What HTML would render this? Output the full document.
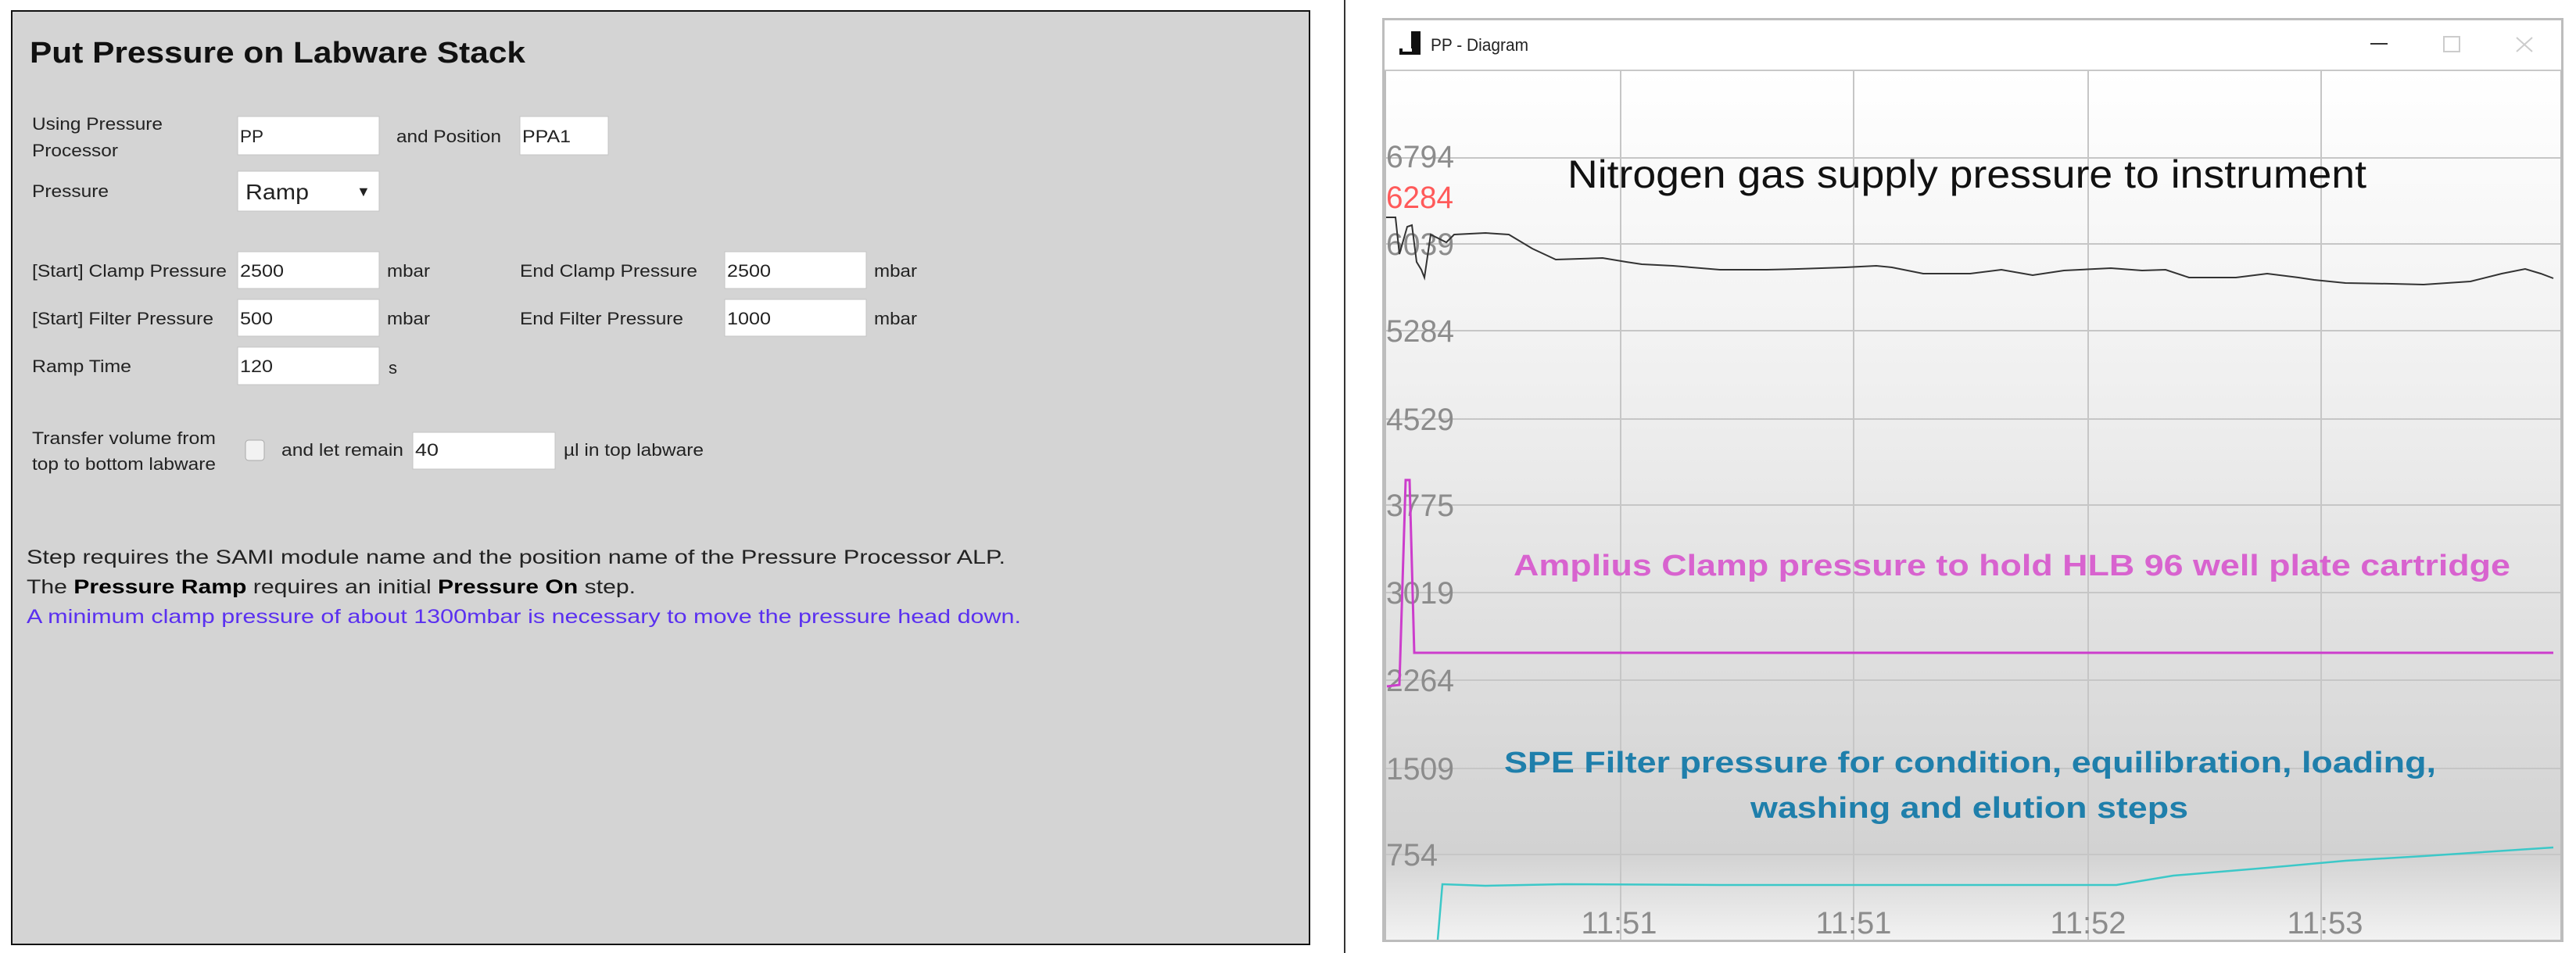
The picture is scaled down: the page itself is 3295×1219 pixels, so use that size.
<!DOCTYPE html>
<html><head><meta charset="utf-8"><style>
html,body{margin:0;padding:0;background:#fff;width:3295px;height:1219px;overflow:hidden}
svg{display:block}
text{font-family:"Liberation Sans",sans-serif}
</style></head><body>
<svg width="3295" height="1219" viewBox="0 0 3295 1219" xmlns="http://www.w3.org/2000/svg">
<defs>
<linearGradient id="g" x1="0" y1="0" x2="0" y2="1">
<stop offset="0" stop-color="#ffffff"/>
<stop offset="0.35" stop-color="#f0f0f0"/>
<stop offset="0.9" stop-color="#d2d2d2"/>
<stop offset="1" stop-color="#f2f2f2"/>
</linearGradient>
</defs>
<!-- LEFT PANEL -->
<rect x="15" y="14" width="1660" height="1194" fill="#d4d4d4" stroke="#111" stroke-width="2"/>
<text x="38" y="80" font-size="38" font-weight="bold" fill="#111" textLength="634" lengthAdjust="spacingAndGlyphs">Put Pressure on Labware Stack</text>
<g font-size="22" fill="#222">
<text x="41" y="166" textLength="167" lengthAdjust="spacingAndGlyphs">Using Pressure</text>
<text x="41" y="200" textLength="110" lengthAdjust="spacingAndGlyphs">Processor</text>
<rect x="304" y="149" width="181" height="49" fill="#fff" stroke="#c4c4c4"/>
<text x="307" y="182" textLength="30" lengthAdjust="spacingAndGlyphs">PP</text>
<text x="507" y="182" textLength="134" lengthAdjust="spacingAndGlyphs">and Position</text>
<rect x="665" y="149" width="113" height="49" fill="#fff" stroke="#c4c4c4"/>
<text x="668" y="182" textLength="62" lengthAdjust="spacingAndGlyphs">PPA1</text>
<text x="41" y="252" textLength="98" lengthAdjust="spacingAndGlyphs">Pressure</text>
<rect x="304" y="219" width="181" height="51" fill="#fff" stroke="#c4c4c4"/>
<text x="314" y="255" font-size="28" textLength="81" lengthAdjust="spacingAndGlyphs">Ramp</text>
<text x="456" y="251" font-size="18">▼</text>

<text x="41" y="354" textLength="249" lengthAdjust="spacingAndGlyphs">[Start] Clamp Pressure</text>
<rect x="304" y="322" width="181" height="47" fill="#fff" stroke="#c4c4c4"/>
<text x="307" y="354" textLength="56" lengthAdjust="spacingAndGlyphs">2500</text>
<text x="495" y="354" textLength="55" lengthAdjust="spacingAndGlyphs">mbar</text>
<text x="665" y="354" textLength="227" lengthAdjust="spacingAndGlyphs">End Clamp Pressure</text>
<rect x="927" y="322" width="181" height="47" fill="#fff" stroke="#c4c4c4"/>
<text x="930" y="354" textLength="56" lengthAdjust="spacingAndGlyphs">2500</text>
<text x="1118" y="354" textLength="55" lengthAdjust="spacingAndGlyphs">mbar</text>

<text x="41" y="415" textLength="232" lengthAdjust="spacingAndGlyphs">[Start] Filter Pressure</text>
<rect x="304" y="383" width="181" height="47" fill="#fff" stroke="#c4c4c4"/>
<text x="307" y="415" textLength="42" lengthAdjust="spacingAndGlyphs">500</text>
<text x="495" y="415" textLength="55" lengthAdjust="spacingAndGlyphs">mbar</text>
<text x="665" y="415" textLength="209" lengthAdjust="spacingAndGlyphs">End Filter Pressure</text>
<rect x="927" y="383" width="181" height="47" fill="#fff" stroke="#c4c4c4"/>
<text x="930" y="415" textLength="56" lengthAdjust="spacingAndGlyphs">1000</text>
<text x="1118" y="415" textLength="55" lengthAdjust="spacingAndGlyphs">mbar</text>

<text x="41" y="476" textLength="127" lengthAdjust="spacingAndGlyphs">Ramp Time</text>
<rect x="304" y="444" width="181" height="48" fill="#fff" stroke="#c4c4c4"/>
<text x="307" y="476" textLength="42" lengthAdjust="spacingAndGlyphs">120</text>
<text x="497" y="478">s</text>

<text x="41" y="568" textLength="235" lengthAdjust="spacingAndGlyphs">Transfer volume from</text>
<text x="41" y="601" textLength="235" lengthAdjust="spacingAndGlyphs">top to bottom labware</text>
<rect x="314" y="563" width="24" height="26" rx="4" fill="#f2f2f2" stroke="#aaa"/>
<text x="360" y="583" textLength="156" lengthAdjust="spacingAndGlyphs">and let remain</text>
<rect x="528" y="553" width="182" height="47" fill="#fff" stroke="#c4c4c4"/>
<text x="531" y="583" textLength="30" lengthAdjust="spacingAndGlyphs">40</text>
<text x="721" y="583" textLength="179" lengthAdjust="spacingAndGlyphs">µl in top labware</text>
</g>
<g font-size="25">
<text x="34" y="721" fill="#222" textLength="1252" lengthAdjust="spacingAndGlyphs">Step requires the SAMI module name and the position name of the Pressure Processor ALP.</text>
<text x="34" y="759" fill="#222" textLength="779" lengthAdjust="spacingAndGlyphs">The <tspan font-weight="bold" fill="#000">Pressure Ramp</tspan> requires an initial <tspan font-weight="bold" fill="#000">Pressure On</tspan> step.</text>
<text x="34" y="797" fill="#5a30f0" textLength="1272" lengthAdjust="spacingAndGlyphs">A minimum clamp pressure of about 1300mbar is necessary to move the pressure head down.</text>
</g>

<!-- DIVIDER -->
<line x1="1720" y1="0" x2="1720" y2="1219" stroke="#333" stroke-width="2"/>

<!-- WINDOW -->
<rect x="1768" y="23" width="1511" height="1182" fill="#bdbdbd"/>
<rect x="1771" y="26" width="1505" height="64" fill="#fff"/>
<line x1="1771" y1="90" x2="3276" y2="90" stroke="#c8c8c8" stroke-width="2"/>
<rect x="1773" y="91" width="1502" height="1111" fill="url(#g)"/>
<!-- title icon -->
<rect x="1805" y="40" width="12" height="30" fill="#111"/>
<rect x="1790" y="62" width="20" height="8" fill="#111"/>
<rect x="1794" y="62" width="12" height="4" fill="#fff"/>
<text x="1830" y="65" font-size="22" fill="#222" textLength="125" lengthAdjust="spacingAndGlyphs">PP - Diagram</text>
<line x1="3032" y1="56" x2="3054" y2="56" stroke="#333" stroke-width="2"/>
<rect x="3126" y="47" width="20" height="19" fill="none" stroke="#ccc" stroke-width="2"/>
<path d="M3219 48 L3239 66 M3239 48 L3219 66" stroke="#ccc" stroke-width="2"/>

<!-- grid -->
<g stroke="#c6c6c6" stroke-width="2">
<line x1="1773" y1="202" x2="3275" y2="202"/>
<line x1="1773" y1="312" x2="3275" y2="312"/>
<line x1="1773" y1="423" x2="3275" y2="423"/>
<line x1="1773" y1="536" x2="3275" y2="536"/>
<line x1="1773" y1="646" x2="3275" y2="646"/>
<line x1="1773" y1="758" x2="3275" y2="758"/>
<line x1="1773" y1="870" x2="3275" y2="870"/>
<line x1="1773" y1="983" x2="3275" y2="983"/>
<line x1="1773" y1="1093" x2="3275" y2="1093"/>
<line x1="2073" y1="91" x2="2073" y2="1202"/>
<line x1="2371" y1="91" x2="2371" y2="1202"/>
<line x1="2671" y1="91" x2="2671" y2="1202"/>
<line x1="2969" y1="91" x2="2969" y2="1202"/>
</g>
<g font-size="40" fill="#8c8c8c">
<text x="1773" y="214" textLength="87" lengthAdjust="spacingAndGlyphs">6794</text>
<text x="1773" y="326" textLength="87" lengthAdjust="spacingAndGlyphs">6039</text>
<text x="1773" y="437" textLength="87" lengthAdjust="spacingAndGlyphs">5284</text>
<text x="1773" y="550" textLength="87" lengthAdjust="spacingAndGlyphs">4529</text>
<text x="1773" y="660" textLength="87" lengthAdjust="spacingAndGlyphs">3775</text>
<text x="1773" y="772" textLength="87" lengthAdjust="spacingAndGlyphs">3019</text>
<text x="1773" y="884" textLength="87" lengthAdjust="spacingAndGlyphs">2264</text>
<text x="1773" y="997" textLength="87" lengthAdjust="spacingAndGlyphs">1509</text>
<text x="1773" y="1107" textLength="66" lengthAdjust="spacingAndGlyphs">754</text>
<text x="2071" y="1194" text-anchor="middle">11:51</text>
<text x="2371" y="1194" text-anchor="middle">11:51</text>
<text x="2671" y="1194" text-anchor="middle">11:52</text>
<text x="2974" y="1194" text-anchor="middle">11:53</text>
</g>
<text x="1773" y="266" font-size="40" fill="#ff5a5a" textLength="86" lengthAdjust="spacingAndGlyphs">6284</text>

<!-- series -->
<polyline fill="none" stroke="#333" stroke-width="2" points="1773,278 1785,278 1790,325 1800,290 1806,288 1812,335 1818,345 1822,355 1830,300 1840,305 1850,310 1860,300 1900,298 1930,300 1960,318 1990,332 2050,330 2080,335 2100,338 2140,340 2200,345 2260,345 2300,344 2360,342 2400,340 2420,342 2460,350 2520,350 2560,345 2600,352 2640,346 2700,343 2740,346 2770,345 2800,355 2860,355 2900,350 2940,355 2960,358 3000,362 3060,363 3100,364 3160,360 3200,350 3230,344 3250,350 3266,356"/>
<polyline fill="none" stroke="#cc3dcc" stroke-width="3" points="1774,878 1790,876 1798,614 1803,614 1809,835 3266,835"/>
<polyline fill="none" stroke="#3cc8c8" stroke-width="2.5" points="1839,1202 1845,1131 1900,1133 2000,1131 2200,1132 2707,1132 2780,1120 2900,1110 3000,1101 3100,1095 3266,1084"/>

<text x="2005" y="240" font-size="50" fill="#111" textLength="1022" lengthAdjust="spacingAndGlyphs">Nitrogen gas supply pressure to instrument</text>
<text x="1936" y="736" font-size="38" font-weight="bold" fill="#d863cf" textLength="1275" lengthAdjust="spacingAndGlyphs">Amplius Clamp pressure to hold HLB 96 well plate cartridge</text>
<text x="1924" y="988" font-size="38" font-weight="bold" fill="#1f7fab" textLength="1192" lengthAdjust="spacingAndGlyphs">SPE Filter pressure for condition, equilibration, loading,</text>
<text x="2239" y="1046" font-size="38" font-weight="bold" fill="#1f7fab" textLength="560" lengthAdjust="spacingAndGlyphs">washing and elution steps</text>
</svg>
</body></html>
